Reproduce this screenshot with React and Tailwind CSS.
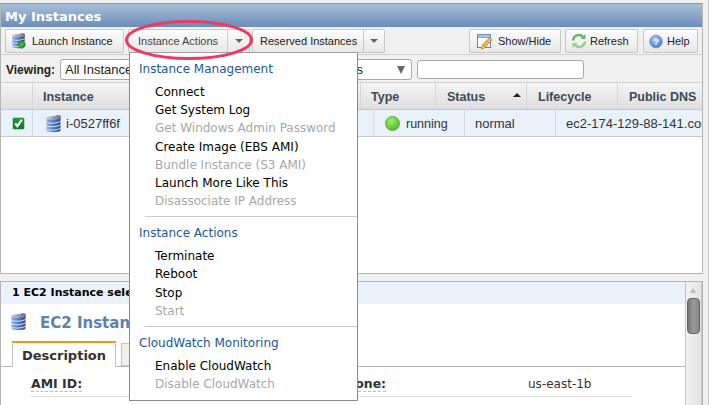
const dv = { fontFamily: '"DejaVu Sans", sans-serif' };

function DbIcon({ w = 15, h = 18, plus = false }) {
  const id = plus ? "dbp" : "db";
  return (
    <svg width={w} height={h} viewBox="0 0 15 18" className="shrink-0">
      <defs>
        <linearGradient id={id} x1="0" x2="1" y1="0" y2="0">
          <stop offset="0" stopColor="#8fb0e6" />
          <stop offset="0.55" stopColor="#4d78c4" />
          <stop offset="1" stopColor="#28457f" />
        </linearGradient>
        <linearGradient id={id + "l"} x1="0" x2="1" y1="0" y2="0">
          <stop offset="0" stopColor="#c9ced6" />
          <stop offset="1" stopColor="#6d7480" />
        </linearGradient>
      </defs>
      <path d="M0.5 3V15.5C0.5 17.6 14.5 17.6 14.5 15.5V1.5C14.5 0.4 12 0.4 9 1C5 1.8 0.5 1.8 0.5 3Z" fill={`url(#${id})`} />
      <path d="M0.5 3C0.5 1.8 5 1.8 9 1C12 0.4 14.5 0.4 14.5 1.5V3.5C14.5 5 0.5 5.5 0.5 4Z" fill={`url(#${id}l)`} />
      <path d="M0.5 7.5C5 8.8 10 8.4 14.5 6.5M0.5 11C5 12.3 10 11.9 14.5 10M0.5 14.4C5 15.7 10 15.3 14.5 13.4" stroke="#d6e4f8" strokeWidth="1" fill="none" />
      {plus && <path d="M9.5 9h3v2.5H15v3h-2.5V17h-3v-2.5H7v-3h2.5Z" fill="#3fbf3a" stroke="#12701a" strokeWidth="0.8" />}
    </svg>
  );
}

function Btn({ children, className = "" }) {
  return (
    <div className={`h-[24px] flex items-center border border-[#c8c8c8] rounded-[2px] bg-gradient-to-b from-[#fcfcfc] to-[#e8e8e8] text-[11px] text-[#222] whitespace-nowrap shrink-0 ${className}`}>
      {children}
    </div>
  );
}

function Caret() {
  return <div className="w-0 h-0 border-x-[4px] border-x-transparent border-t-[4px] border-t-[#666]" />;
}

function Th({ w, children, className = "" }) {
  return (
    <div className={`h-full flex items-center shrink-0 border-r border-[#d8d8d8] pt-[2px] font-bold text-[#3c4a57] text-[12.5px] ${className}`} style={{ width: w }}>
      {children}
    </div>
  );
}

function Td({ w, children, className = "" }) {
  return (
    <div className={`h-full flex items-center shrink-0 border-r border-[#d6dbe2] text-[13px] text-[#333] whitespace-nowrap overflow-hidden ${className}`} style={{ width: w }}>
      {children}
    </div>
  );
}

function Item({ children, off, className = "h-[18.2px]" }) {
  return <div className={`pl-[25px] leading-[18px] whitespace-nowrap ${className} ${off ? "text-[#a8a8a8]" : "text-black"}`}>{children}</div>;
}

function Head({ children }) {
  return <div className="pl-[9px] h-[18px] leading-[18px] text-[#17589f] whitespace-nowrap">{children}</div>;
}

export default function App() {
  return (
    <div className="relative w-[721px] h-[405px] overflow-hidden bg-white flex" style={{ fontFamily: '"Liberation Sans", sans-serif' }}>
      <div className="w-[709px] h-full bg-[#f0f0f0] border-r border-[#c4c4c4] flex flex-col pt-[3px] shrink-0">
        <div className="w-[703px] h-[271px] border border-[#b5b5b5] border-t-[#7b97bd] bg-white flex flex-col shrink-0">
          <div className="h-[23px] bg-gradient-to-b from-[#a9bfd9] to-[#6b8db8] text-white font-bold text-[13px] flex items-center pl-[4px] pt-[2px] shrink-0" style={dv}>My Instances</div>
          <div className="h-[28px] bg-[#f0f0f0] border-b border-[#d0d0d0] flex items-start pt-[2px] pl-[4px] shrink-0">
            <Btn className="w-[119px] pl-[5px] gap-[6px]"><DbIcon w={15} h={16} plus /><span>Launch Instance</span></Btn>
            <div className="w-[4px] shrink-0" />
            <Btn className="w-[122px]">
              <span className="w-[98px] pl-[9px] text-[#444]">Instance Actions</span>
              <div className="h-full flex-1 border-l border-[#d0d0d0] flex items-center justify-center"><Caret /></div>
            </Btn>
            <div className="w-[2px] shrink-0" />
            <Btn className="w-[111px] pl-[7px] text-[#222] border-r-0 rounded-r-none">Reserved Instances</Btn>
            <Btn className="w-[22px] justify-center rounded-l-none"><Caret /></Btn>
            <div className="w-[84px] shrink-0" />
            <Btn className="w-[92px] pl-[7px] gap-[5px]">
              <svg width="16" height="17" viewBox="0 0 16 17" className="shrink-0">
                <rect x="0.5" y="1.5" width="13" height="13" fill="#fff" stroke="#5a86c5" />
                <rect x="0.5" y="1.5" width="13" height="3" fill="#a6c5ee" stroke="#5a86c5" strokeWidth="0.6" />
                <path d="M4.5 16l1-4 7-7.5 2.5 2.5-7 7.5Z" fill="#f2b84b" stroke="#a8701a" strokeWidth="0.7" />
                <path d="M4.5 16l1-4 2.5 2.5Z" fill="#f7e3b8" stroke="#a8701a" strokeWidth="0.5" />
              </svg>
              <span>Show/Hide</span>
            </Btn>
            <div className="w-[4px] shrink-0" />
            <Btn className="w-[73px] pl-[5px] gap-[3px]">
              <svg width="16" height="16" viewBox="0 0 16 16" fill="none" className="shrink-0">
                <path d="M2 7.5a5.8 5.8 0 0 1 10-3.6" stroke="#5fb85a" strokeWidth="2.4" />
                <path d="M14 8.5a5.8 5.8 0 0 1-10 3.6" stroke="#8fd08a" strokeWidth="2.4" />
                <path d="M14.5 1v5h-5Z" fill="#5fb85a" />
                <path d="M1.5 15v-5h5Z" fill="#8fd08a" />
              </svg>
              <span>Refresh</span>
            </Btn>
            <div className="w-[5px] shrink-0" />
            <Btn className="w-[55px] pl-[5px] gap-[4px]">
              <svg width="14" height="15" viewBox="0 0 15 15" className="shrink-0">
                <defs>
                  <radialGradient id="hlp" cx="0.4" cy="0.3" r="0.8"><stop offset="0" stopColor="#a9cdf7" /><stop offset="1" stopColor="#2a6fd0" /></radialGradient>
                </defs>
                <circle cx="7.5" cy="7.5" r="6.8" fill="url(#hlp)" stroke="#8a98aa" />
                <text x="7.5" y="11" textAnchor="middle" fontSize="10" fontWeight="bold" fill="#fff" fontFamily="Liberation Sans">?</text>
              </svg>
              <span>Help</span>
            </Btn>
          </div>
          <div className="h-[28px] bg-[#f0f0f0] border-b border-[#d0d0d0] flex items-start pt-[4px] pl-[5px] shrink-0">
            <span className="font-bold text-[12px] text-[#222] w-[54px] h-[20px] flex items-center mt-[1px] shrink-0">Viewing:</span>
            <div className="w-[352px] h-[21px] bg-white border border-[#aaa] rounded-[3px] text-[13px] text-[#222] pl-[4px] flex items-center relative shrink-0">
              <div className="w-[298px] flex justify-between whitespace-nowrap">
                <span>All Instances</span>
                <span>All Instance Types</span>
              </div>
              <div className="absolute right-[6px] top-[6px] w-0 h-0 border-x-[4px] border-x-transparent border-t-[8px] border-t-[#666]" />
            </div>
            <div className="w-[5px] shrink-0" />
            <div className="w-[167px] h-[19px] mt-[1px] bg-white border border-[#aaa] rounded-[3px] shrink-0" />
          </div>
          <div className="h-[27px] bg-gradient-to-b from-[#f5f5f5] to-[#dedede] border-b border-[#c8c8c8] flex items-center shrink-0">
            <Th w={32} />
            <Th w={328} className="pl-[10px]">Instance</Th>
            <Th w={75} className="pl-[10px]">Type</Th>
            <Th w={91} className="pl-[11px] relative">
              Status
              <div className="absolute right-[5px] top-[10px] w-0 h-0 border-x-[4px] border-x-transparent border-b-[4px] border-b-[#222]" />
            </Th>
            <Th w={91} className="pl-[11px]">Lifecycle</Th>
            <div className="pl-[11px] pt-[2px] font-bold text-[#3c4a57] text-[12.5px] whitespace-nowrap">Public DNS</div>
          </div>
          <div className="h-[27px] bg-[#e9f1fb] border-b border-[#c8c8c8] flex items-center shrink-0 overflow-hidden">
            <Td w={32} className="pl-[11px]">
              <div className="w-[13px] h-[13px] rounded-[2px] bg-gradient-to-b from-[#1d9a3a] to-[#0f7a28] border border-[#b5d8bd] flex items-center justify-center">
                <svg width="11" height="11" viewBox="0 0 10 10" fill="none" stroke="#fff" strokeWidth="2"><path d="M2 5l2 2.5L8 1.5" /></svg>
              </div>
            </Td>
            <Td w={341} className="pl-[13px] gap-[5px] pt-[1px]"><DbIcon /><span className="pt-[1px]">i-0527ff6f</span></Td>
            <Td w={91} className="pl-[11px] gap-[6px]">
              <div className="w-[15px] h-[15px] rounded-full bg-[radial-gradient(circle_at_40%_30%,#a4ec6c,#3fae18)] border border-[#5aa83a]" />
              <span className="text-[12.5px] pt-[2px]">running</span>
            </Td>
            <Td w={91} className="pl-[10px] pt-[2px]">normal</Td>
            <div className="pl-[10px] pt-[2px] text-[13px] text-[#333] whitespace-nowrap overflow-hidden flex-1 min-w-0">ec2-174-129-88-141.compute-1.amazonaws.com</div>
          </div>
          <div className="flex-1 bg-white" />
        </div>
        <div className="h-[7px] shrink-0" />
        <div className="w-[703px] flex-1 border-t border-l border-r border-[#b5b5b5] bg-white flex overflow-hidden">
          <div className="flex-1 flex flex-col min-w-0">
            <div className="h-[22px] bg-[#e9f1fb] flex items-center pl-[11px] text-[11px] font-bold text-black whitespace-nowrap shrink-0" style={dv}>1 EC2 Instance selected.</div>
            <div className="h-[63px] relative border-b border-[#b5b5b5] shrink-0">
              <div className="absolute left-[10px] top-[9px]"><DbIcon /></div>
              <div className="absolute left-[39px] top-[8px] text-[15px] font-bold text-[#5a82ad] whitespace-nowrap" style={dv}>EC2 Instance</div>
              <div className="absolute left-[11px] bottom-[-1px] w-[104px] h-[26px] bg-white border-x border-[#c4c4c4] border-t-2 border-t-[#f09a00] flex items-center justify-center pt-[1px] font-bold text-[13px] text-[#333]" style={dv}>Description</div>
              <div className="absolute left-[120px] bottom-0 w-[100px] h-[23px] bg-[#f0f0f0] border border-[#c4c4c4]" />
            </div>
            <div className="relative h-[30px] text-[12px] shrink-0" style={dv}>
              <span className="absolute left-[30px] top-[10px] text-[12.5px] leading-[14px] font-bold text-[#333] border-b border-dashed border-[#bbb]">AMI ID:</span>
              <span className="absolute left-[262px] top-[10px] text-[12.5px] leading-[14px] font-bold text-[#333] border-b border-dashed border-[#bbb] whitespace-nowrap">Availability Zone:</span>
              <span className="absolute left-[527px] top-[10px] leading-[14px] text-[#333]">us-east-1b</span>
              <div className="absolute left-[30px] top-[29px] w-[601px] border-b border-[#ddd]" />
            </div>
          </div>
          <div className="w-[17px] shrink-0 border-x border-[#c4c4c4] bg-gradient-to-r from-[#f2f2f2] to-[#e4e4e4] relative">
            <div className="absolute left-[4px] top-[6px] w-0 h-0 border-x-[3px] border-x-transparent border-b-[5px] border-b-[#bbb]" />
            <div className="absolute left-[1px] top-[16px] w-[13px] h-[36px] rounded-[4px] border border-[#666] bg-gradient-to-r from-[#777] via-[#999] to-[#888]" />
          </div>
        </div>
      </div>

      <div className="absolute left-[129px] top-[52px] w-[229px] h-[349px] bg-white border border-[#8c8c8c] border-t-[#a0a0a0] pt-[7px] text-[12px]" style={dv}>
        <Head>Instance Management</Head>
        <div className="h-[5px]" />
        <Item>Connect</Item>
        <Item>Get System Log</Item>
        <Item off>Get Windows Admin Password</Item>
        <Item>Create Image (EBS AMI)</Item>
        <Item off>Bundle Instance (S3 AMI)</Item>
        <Item>Launch More Like This</Item>
        <Item off>Disassociate IP Address</Item>
        <div className="ml-[15px] mt-[6px] mb-[7px] border-t border-[#c8c8c8]" />
        <Head>Instance Actions</Head>
        <div className="h-[4.6px]" />
        <Item className="h-[18px]">Terminate</Item>
        <Item className="h-[19px]">Reboot</Item>
        <Item className="h-[18px]">Stop</Item>
        <Item className="h-[18px]" off>Start</Item>
        <div className="ml-[15px] mt-[6px] mb-[7px] border-t border-[#c8c8c8]" />
        <Head>CloudWatch Monitoring</Head>
        <div className="h-[5px]" />
        <Item>Enable CloudWatch</Item>
        <Item off>Disable CloudWatch</Item>
      </div>

      <svg className="absolute left-[120px] top-[15px] pointer-events-none" width="140" height="50" viewBox="0 0 140 50">
        <ellipse cx="69" cy="25" rx="62.5" ry="18.5" fill="none" stroke="#ee3a62" strokeWidth="3" />
      </svg>
    </div>
  );
}
